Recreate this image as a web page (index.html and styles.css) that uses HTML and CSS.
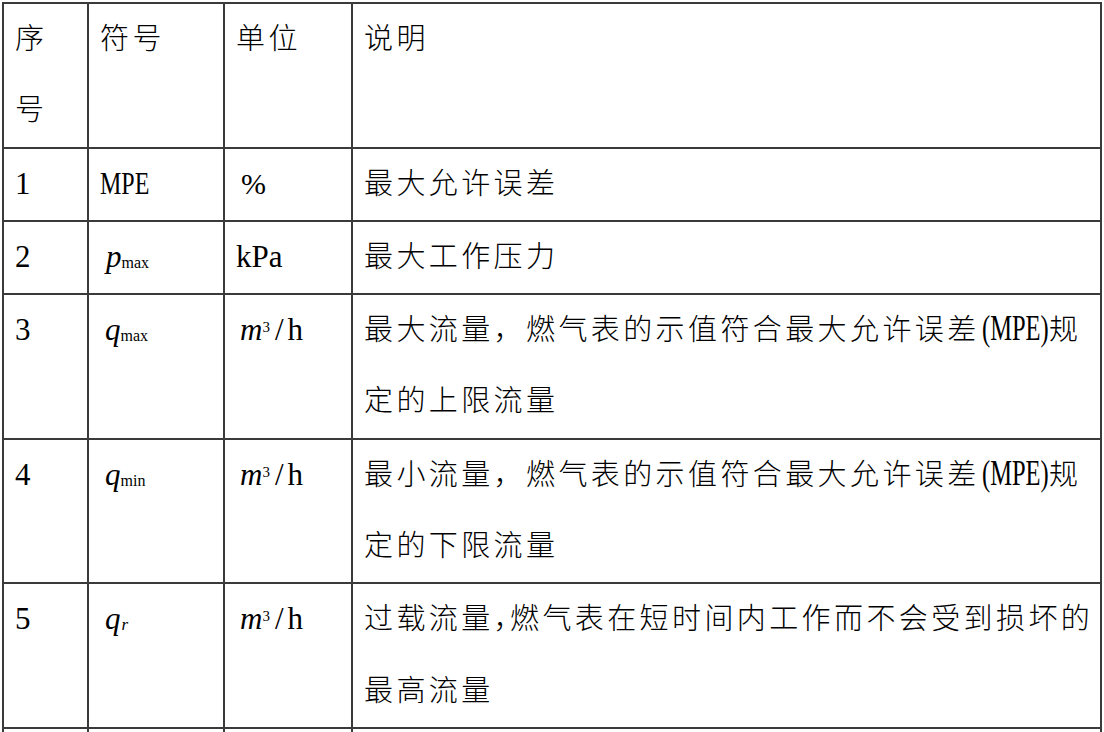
FILE: index.html
```html
<!DOCTYPE html>
<html lang="zh-CN">
<head>
<meta charset="utf-8">
<title>符号说明</title>
<link rel="stylesheet" href="styles.css">
</head>
<body>
<table class="grid">
  <colgroup><col class="c1"><col class="c2"><col class="c3"><col class="c4"></colgroup>
  <tr>
    <td>序<br>号</td>
    <td>符号</td>
    <td>单位</td>
    <td>说明</td>
  </tr>
  <tr>
    <td><span class="lat">1</span></td>
    <td><span class="nar">MPE</span></td>
    <td><span class="pct">%</span></td>
    <td>最大允许误差</td>
  </tr>
  <tr>
    <td><span class="lat">2</span></td>
    <td><span class="sym sym-p"><i class="v">p</i><span class="sub">max</span></span></td>
    <td><span class="lat">kPa</span></td>
    <td>最大工作压力</td>
  </tr>
  <tr>
    <td><span class="lat">3</span></td>
    <td><span class="sym"><i class="v">q</i><span class="sub">max</span></span></td>
    <td><span class="unit"><i class="v">m</i><span class="sup">3</span><span class="sl">/</span>h</span></td>
    <td class="nw">最大流量，燃气表的示值符合最大允许误差<span class="nar nar-in">(MPE)</span>规<br>定的上限流量</td>
  </tr>
  <tr>
    <td><span class="lat">4</span></td>
    <td><span class="sym"><i class="v">q</i><span class="sub">min</span></span></td>
    <td><span class="unit"><i class="v">m</i><span class="sup">3</span><span class="sl">/</span>h</span></td>
    <td class="nw">最小流量，燃气表的示值符合最大允许误差<span class="nar nar-in">(MPE)</span>规<br>定的下限流量</td>
  </tr>
  <tr>
    <td><span class="lat">5</span></td>
    <td><span class="sym"><i class="v">q</i><i class="sub sub-i">r</i></span></td>
    <td><span class="unit"><i class="v">m</i><span class="sup">3</span><span class="sl">/</span>h</span></td>
    <td class="nw">过载流量<span class="hwc">，</span>燃气表在短时间内工作而不会受到损坏的<br>最高流量</td>
  </tr>
  <tr class="tail">
    <td></td><td></td><td></td><td></td>
  </tr>
</table>
</body>
</html>
```

FILE: styles.css
```css
html, body {
  margin: 0;
  padding: 0;
  background: #ffffff;
  height: 732px;
  overflow: hidden;
}

.grid {
  border-collapse: collapse;
  table-layout: fixed;
  width: 1100px;
  margin: 2px 0 0 2px;
  color: #000;
}

.c1 { width: 85px; }
.c2 { width: 136px; }
.c3 { width: 128px; }
.c4 { width: 749px; }

.grid td {
  border: 2px solid #3a3a3a;
  padding: 0 0 0 11px;
  vertical-align: top;
  font-family: "Liberation Serif", "Noto Sans CJK SC", serif;
  font-size: 29px;
  font-weight: 300;
  line-height: 71.3px;
  letter-spacing: 3.4px;
}

.grid td.nw { white-space: nowrap; }

.tail td { height: 40px; }

.lat {
  font-size: 31px;
  font-weight: 400;
  line-height: 1;
  letter-spacing: 0;
}

.nar {
  display: inline-block;
  font-size: 32px;
  font-weight: 400;
  line-height: 1;
  letter-spacing: 0;
  transform: scaleX(0.75);
  transform-origin: left center;
}

.nar-in {
  font-size: 35px;
  transform: scaleX(0.7);
  margin-left: 2px;
  margin-right: -28px;
}

.pct {
  font-size: 30px;
  font-weight: 400;
  line-height: 1;
  letter-spacing: 0;
  margin-left: 5px;
}

.sym {
  font-weight: 400;
  line-height: 1;
  letter-spacing: 0;
  margin-left: 5px;
}

.sym-p { margin-left: 6px; }

.v {
  font-style: italic;
  font-size: 31px;
}

.sub {
  font-size: 16px;
  font-style: normal;
  vertical-align: -1px;
}

.sub-i {
  font-style: italic;
  font-size: 17px;
  margin-left: 1px;
}

.unit {
  font-size: 31px;
  font-weight: 400;
  line-height: 1;
  letter-spacing: 0;
  margin-left: 4px;
}

.sup {
  font-size: 15px;
  vertical-align: 8px;
}

.sl { margin: 0 4px 0 5px; }

.hwc { letter-spacing: -12.6px; }
```
